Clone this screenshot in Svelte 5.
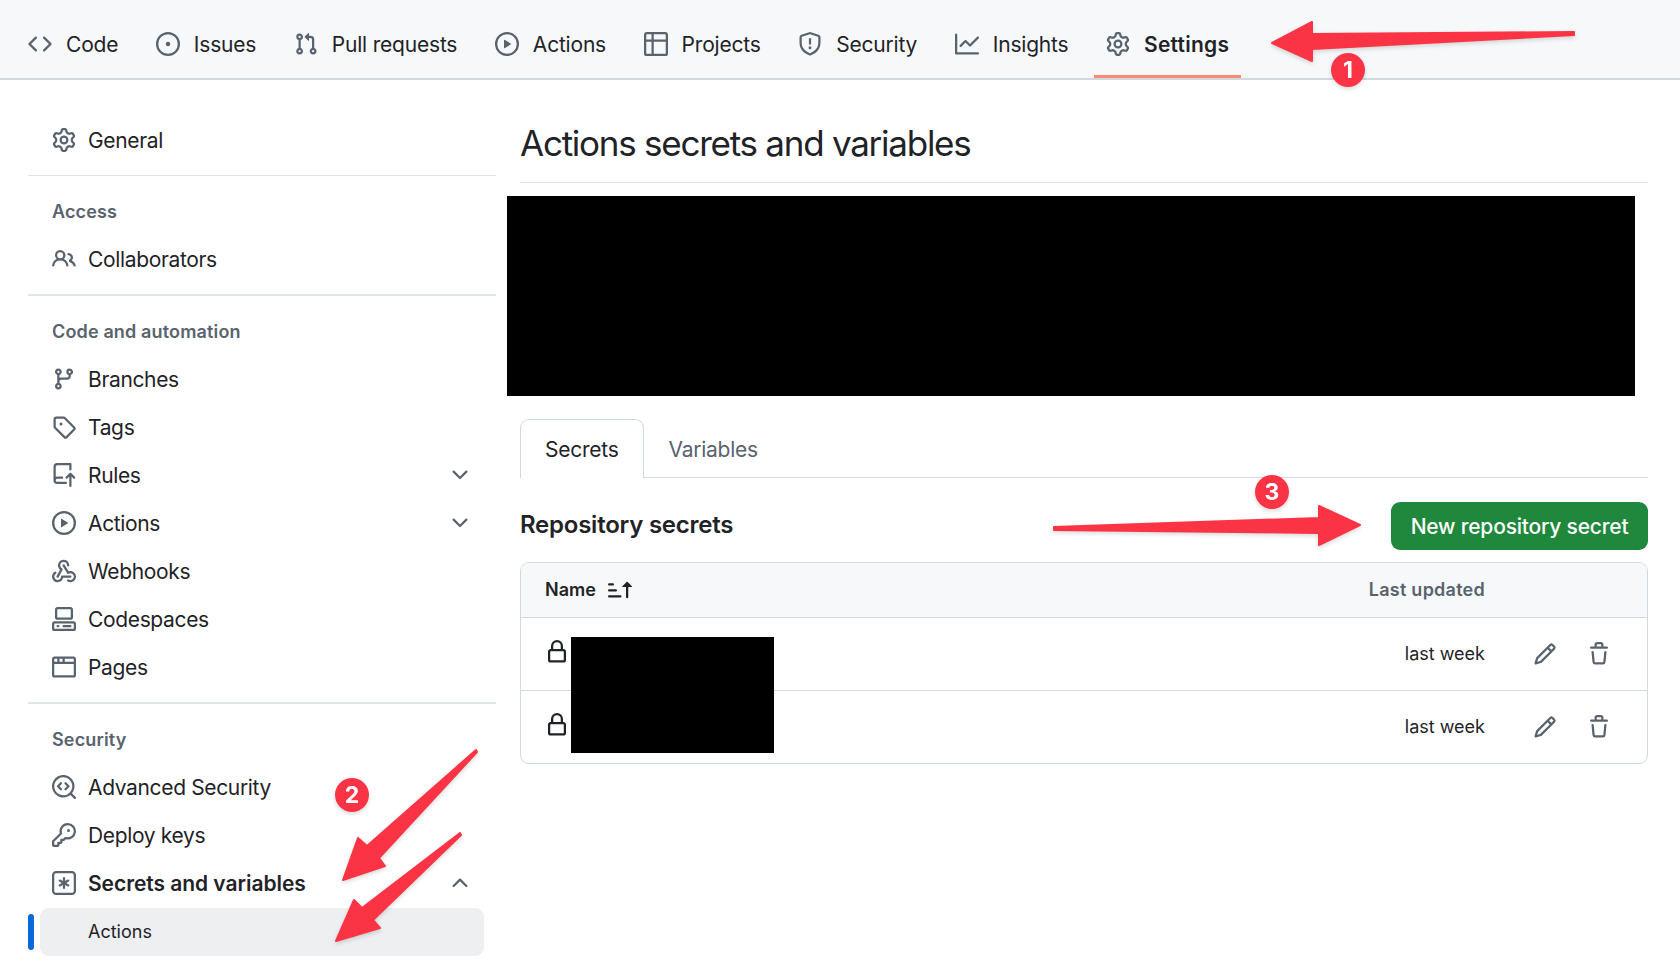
<script>
  const icons = {
    code: ['m11.28 3.22 4.25 4.25a.75.75 0 0 1 0 1.06l-4.25 4.25a.749.749 0 0 1-1.275-.326.749.749 0 0 1 .215-.734L13.94 8l-3.72-3.72a.749.749 0 0 1 .326-1.275.749.749 0 0 1 .734.215Zm-6.56 0a.751.751 0 0 1 1.042.018.751.751 0 0 1 .018 1.042L2.06 8l3.72 3.72a.749.749 0 0 1-.326 1.275.749.749 0 0 1-.734-.215L.47 8.53a.75.75 0 0 1 0-1.06Z'],
    issue: ['M8 9.5a1.5 1.5 0 1 0 0-3 1.5 1.5 0 0 0 0 3Z', 'M8 0a8 8 0 1 1 0 16A8 8 0 0 1 8 0ZM1.5 8a6.5 6.5 0 1 0 13 0 6.5 6.5 0 0 0-13 0Z'],
    pull: ['M1.5 3.25a2.25 2.25 0 1 1 3 2.122v5.256a2.251 2.251 0 1 1-1.5 0V5.372A2.25 2.25 0 0 1 1.5 3.25Zm5.677-.177L9.573.677A.25.25 0 0 1 10 .854V2.5h1A2.5 2.5 0 0 1 13.5 5v5.628a2.251 2.251 0 1 1-1.5 0V5a1 1 0 0 0-1-1h-1v1.646a.25.25 0 0 1-.427.177L7.177 3.427a.25.25 0 0 1 0-.354ZM3.75 2.5a.75.75 0 1 0 0 1.5.75.75 0 0 0 0-1.5Zm0 9.5a.75.75 0 1 0 0 1.5.75.75 0 0 0 0-1.5Zm8.25.75a.75.75 0 1 0 1.5 0 .75.75 0 0 0-1.5 0Z'],
    play: ['M8 0a8 8 0 1 1 0 16A8 8 0 0 1 8 0ZM1.5 8a6.5 6.5 0 1 0 13 0 6.5 6.5 0 0 0-13 0Zm4.879-2.773 4.264 2.559a.25.25 0 0 1 0 .428l-4.264 2.559A.25.25 0 0 1 6 10.559V5.442a.25.25 0 0 1 .379-.215Z'],
    table: ['M0 1.75C0 .784.784 0 1.75 0h12.5C15.216 0 16 .784 16 1.75v12.5A1.75 1.75 0 0 1 14.25 16H1.75A1.75 1.75 0 0 1 0 14.25ZM6.5 6.5v8h7.75a.25.25 0 0 0 .25-.25V6.5Zm8-1.5V1.75a.25.25 0 0 0-.25-.25H6.5V5Zm-13 1.5v7.75c0 .138.112.25.25.25H5v-8ZM5 5V1.5H1.75a.25.25 0 0 0-.25.25V5Z'],
    shield: ['M7.467.133a1.748 1.748 0 0 1 1.066 0l5.25 1.68A1.75 1.75 0 0 1 15 3.48V7c0 1.566-.32 3.182-1.303 4.682-.983 1.498-2.585 2.813-5.032 3.855a1.697 1.697 0 0 1-1.33 0c-2.447-1.042-4.049-2.357-5.032-3.855C1.32 10.182 1 8.566 1 7V3.48a1.75 1.75 0 0 1 1.217-1.667Zm.61 1.429a.25.25 0 0 0-.153 0l-5.25 1.68a.25.25 0 0 0-.174.238V7c0 1.358.275 2.666 1.057 3.86.784 1.194 2.121 2.34 4.366 3.297a.196.196 0 0 0 .154 0c2.245-.956 3.582-2.104 4.366-3.298C13.225 9.666 13.5 8.36 13.5 7V3.48a.251.251 0 0 0-.174-.237l-5.25-1.68ZM8.75 4.75v3a.75.75 0 0 1-1.5 0v-3a.75.75 0 0 1 1.5 0ZM9 10.5a1 1 0 1 1-2 0 1 1 0 0 1 2 0Z'],
    graph: ['M1.5 1.75V13.5h13.75a.75.75 0 0 1 0 1.5H.75a.75.75 0 0 1-.75-.75V1.75a.75.75 0 0 1 1.5 0Zm14.28 2.53-5.25 5.25a.75.75 0 0 1-1.06 0L7 7.06 4.28 9.78a.751.751 0 0 1-1.042-.018.751.751 0 0 1-.018-1.042l3.25-3.25a.75.75 0 0 1 1.06 0L10 7.94l4.72-4.72a.751.751 0 0 1 1.042.018.751.751 0 0 1 .018 1.042Z'],
    gear: ['M8 0a8.2 8.2 0 0 1 .701.031C9.444.095 9.99.645 10.16 1.29l.288 1.107c.018.066.079.158.212.224.231.114.454.243.668.386.123.082.233.09.299.071l1.103-.303c.644-.176 1.392.021 1.82.63.27.385.506.792.704 1.218.315.675.111 1.422-.364 1.891l-.814.806c-.049.048-.098.147-.088.294.016.257.016.515 0 .772-.01.147.038.246.088.294l.814.806c.475.469.679 1.216.364 1.891a7.977 7.977 0 0 1-.704 1.217c-.428.61-1.176.807-1.82.63l-1.102-.302c-.067-.019-.177-.011-.3.071a5.909 5.909 0 0 1-.668.386c-.133.066-.194.158-.211.224l-.29 1.106c-.168.646-.715 1.196-1.458 1.26a8.006 8.006 0 0 1-1.402 0c-.743-.064-1.289-.614-1.458-1.26l-.289-1.106c-.018-.066-.079-.158-.212-.224a5.738 5.738 0 0 1-.668-.386c-.123-.082-.233-.09-.299-.071l-1.103.303c-.644.176-1.392-.021-1.82-.63a8.12 8.12 0 0 1-.704-1.218c-.315-.675-.111-1.422.363-1.891l.815-.806c.05-.048.098-.147.088-.294a6.214 6.214 0 0 1 0-.772c.01-.147-.038-.246-.088-.294l-.815-.806C.635 6.045.431 5.298.746 4.623a7.92 7.92 0 0 1 .704-1.217c.428-.61 1.176-.807 1.82-.63l1.102.302c.067.019.177.011.3-.071.214-.143.437-.272.668-.386.133-.066.194-.158.211-.224l.29-1.106C6.009.645 6.556.095 7.299.03 7.53.01 7.764 0 8 0Zm-.571 1.525c-.036.003-.108.036-.137.146l-.289 1.105c-.147.561-.549.967-.998 1.189-.173.086-.34.183-.5.29-.417.278-.97.423-1.529.27l-1.103-.303c-.109-.03-.175.016-.195.045-.22.312-.412.644-.573.99-.014.031-.021.11.059.19l.815.806c.411.406.562.957.53 1.456a4.709 4.709 0 0 0 0 .582c.032.499-.119 1.05-.53 1.456l-.815.806c-.081.08-.073.159-.059.19.162.346.353.677.573.989.02.03.085.076.195.046l1.102-.303c.56-.153 1.113-.008 1.53.27.161.107.328.204.501.29.447.222.85.629.997 1.189l.289 1.105c.029.109.101.143.137.146a6.6 6.6 0 0 0 1.142 0c.036-.003.108-.036.137-.146l.289-1.105c.147-.561.549-.967.998-1.189.173-.086.34-.183.5-.29.417-.278.97-.423 1.529-.27l1.103.303c.109.029.175-.016.195-.045.22-.313.411-.644.573-.99.014-.031.021-.11-.059-.19l-.815-.806c-.411-.406-.562-.957-.53-1.456a4.709 4.709 0 0 0 0-.582c-.032-.499.119-1.05.53-1.456l.815-.806c.081-.08.073-.159.059-.19a6.464 6.464 0 0 0-.573-.989c-.02-.03-.085-.076-.195-.046l-1.102.303c-.56.153-1.113.008-1.53-.27a4.44 4.44 0 0 0-.501-.29c-.447-.222-.85-.629-.997-1.189l-.289-1.105c-.029-.11-.101-.143-.137-.146a6.6 6.6 0 0 0-1.142 0ZM11 8a3 3 0 1 1-6 0 3 3 0 0 1 6 0ZM9.5 8a1.5 1.5 0 1 0-3.001.001A1.5 1.5 0 0 0 9.5 8Z'],
    people: ['M2 5.5a3.5 3.5 0 1 1 5.898 2.549 5.508 5.508 0 0 1 3.034 4.084.75.75 0 1 1-1.482.235 4 4 0 0 0-7.9 0 .75.75 0 0 1-1.482-.236A5.507 5.507 0 0 1 3.102 8.05 3.493 3.493 0 0 1 2 5.5ZM11 4a3.001 3.001 0 0 1 2.22 5.018 5.01 5.01 0 0 1 2.56 3.012.749.749 0 0 1-.885.954.752.752 0 0 1-.549-.514 3.507 3.507 0 0 0-2.522-2.372.75.75 0 0 1-.574-.73v-.352a.75.75 0 0 1 .416-.672A1.5 1.5 0 0 0 11 5.5.75.75 0 0 1 11 4Zm-5.5-.5a2 2 0 1 0-.001 3.999A2 2 0 0 0 5.5 3.5Z'],
    branch: ['M9.5 3.25a2.25 2.25 0 1 1 3 2.122V6A2.5 2.5 0 0 1 10 8.5H6a1 1 0 0 0-1 1v1.128a2.251 2.251 0 1 1-1.5 0V5.372a2.25 2.25 0 1 1 1.5 0v1.836A2.493 2.493 0 0 1 6 7h4a1 1 0 0 0 1-1v-.628A2.25 2.25 0 0 1 9.5 3.25Zm-6 0a.75.75 0 1 0 1.5 0 .75.75 0 0 0-1.5 0Zm8.25-.75a.75.75 0 1 0 0 1.5.75.75 0 0 0 0-1.5ZM4.25 12a.75.75 0 1 0 0 1.5.75.75 0 0 0 0-1.5Z'],
    tag: ['M1 7.775V2.75C1 1.784 1.784 1 2.75 1h5.025c.464 0 .91.184 1.238.513l6.25 6.25a1.75 1.75 0 0 1 0 2.474l-5.026 5.026a1.75 1.75 0 0 1-2.474 0l-6.25-6.25A1.752 1.752 0 0 1 1 7.775Zm1.5 0c0 .066.026.13.073.177l6.25 6.25a.25.25 0 0 0 .354 0l5.025-5.025a.25.25 0 0 0 0-.354l-6.25-6.25a.25.25 0 0 0-.177-.073H2.75a.25.25 0 0 0-.25.25ZM6 5a1 1 0 1 1 0 2 1 1 0 0 1 0-2Z'],
    push: ['M1 2.5A2.5 2.5 0 0 1 3.5 0h8.75a.75.75 0 0 1 .75.75v3.5a.75.75 0 0 1-1.5 0V1.5h-8a1 1 0 0 0-1 1v6.708A2.493 2.493 0 0 1 3.5 9h3.25a.75.75 0 0 1 0 1.5H3.5a1 1 0 0 0 0 2h5.75a.75.75 0 0 1 0 1.5H3.5A2.5 2.5 0 0 1 1 11.5Zm13.23 7.79h-.001l-1.224-1.224v6.184a.75.75 0 0 1-1.5 0V9.066L10.28 10.29a.75.75 0 0 1-1.06-1.061l2.505-2.504a.75.75 0 0 1 1.06 0L15.29 9.23a.751.751 0 0 1-.018 1.042.751.751 0 0 1-1.042.018Z'],
    webhook: ['M5.5 4.25a2.25 2.25 0 0 1 4.5 0 .75.75 0 0 0 1.5 0 3.75 3.75 0 1 0-6.14 2.889l-2.272 4.258a.75.75 0 0 0 1.324.706L7 7.25a.75.75 0 0 0-.309-1.015A2.25 2.25 0 0 1 5.5 4.25Z', 'M7.364 3.607a.75.75 0 0 1 1.03.257l2.608 4.349a3.75 3.75 0 1 1-.628 6.785.75.75 0 0 1 .752-1.299 2.25 2.25 0 1 0-.033-3.88.75.75 0 0 1-1.03-.256L7.107 4.636a.75.75 0 0 1 .257-1.03Z', 'M2.9 8.776A.75.75 0 0 1 2.625 9.8 2.25 2.25 0 1 0 6 11.75a.75.75 0 0 1 .75-.751h5.5a.75.75 0 0 1 0 1.5H7.425a3.751 3.751 0 1 1-5.55-3.998.75.75 0 0 1 1.024.274Z'],
    codespaces: ['M0 11.25c0-.966.784-1.75 1.75-1.75h12.5c.966 0 1.75.784 1.75 1.75v3A1.75 1.75 0 0 1 14.25 16H1.75A1.75 1.75 0 0 1 0 14.25Zm2-9.5C2 .784 2.784 0 3.75 0h8.5C13.216 0 14 .784 14 1.75v5a1.75 1.75 0 0 1-1.75 1.75h-8.5A1.75 1.75 0 0 1 2 6.75Zm1.75-.25a.25.25 0 0 0-.25.25v5c0 .138.112.25.25.25h8.5a.25.25 0 0 0 .25-.25v-5a.25.25 0 0 0-.25-.25Zm-2 9.5a.25.25 0 0 0-.25.25v3c0 .138.112.25.25.25h12.5a.25.25 0 0 0 .25-.25v-3a.25.25 0 0 0-.25-.25Z', 'M7 12.75a.75.75 0 0 1 .75-.75h4.5a.75.75 0 0 1 0 1.5h-4.5a.75.75 0 0 1-.75-.75Zm-4 0a.75.75 0 0 1 .75-.75h.5a.75.75 0 0 1 0 1.5h-.5a.75.75 0 0 1-.75-.75Z'],
    browser: ['M0 2.75C0 1.784.784 1 1.75 1h12.5c.966 0 1.75.784 1.75 1.75v10.5A1.75 1.75 0 0 1 14.25 15H1.75A1.75 1.75 0 0 1 0 13.25ZM14.5 6h-13v7.25c0 .138.112.25.25.25h12.5a.25.25 0 0 0 .25-.25Zm0-1.5v-1.75a.25.25 0 0 0-.25-.25H8.5v2ZM7 4.5V2.5H5v2ZM3.5 4.5v-2H1.75a.25.25 0 0 0-.25.25V4.5Z'],
    codescan: ['M8.47 4.97a.75.75 0 0 0 0 1.06L9.94 7.5 8.47 8.97a.75.75 0 1 0 1.06 1.06l2-2a.75.75 0 0 0 0-1.06l-2-2a.75.75 0 0 0-1.06 0ZM6.53 6.03a.75.75 0 0 0-1.06-1.06l-2 2a.75.75 0 0 0 0 1.06l2 2a.75.75 0 1 0 1.06-1.06L5.06 7.5l1.47-1.47Z', 'M12.246 13.307a7.501 7.501 0 1 1 1.06-1.06l2.474 2.473a.749.749 0 0 1-.326 1.275.749.749 0 0 1-.734-.215ZM1.5 7.5a6 6 0 0 0 10.386 4.093.748.748 0 0 1 .207-.206A6 6 0 1 0 1.5 7.5Z'],
    key: ['M10.5 0a5.499 5.499 0 1 1-1.288 10.848l-.932.932a.749.749 0 0 1-.53.22H7v.75a.749.749 0 0 1-.22.53l-.5.5a.749.749 0 0 1-.53.22H5v.75a.749.749 0 0 1-.22.53l-.5.5a.749.749 0 0 1-.53.22h-2A1.75 1.75 0 0 1 0 14.25v-2c0-.199.079-.389.22-.53l4.932-4.932A5.5 5.5 0 0 1 10.5 0Zm-4 5.5c-.001.431.069.86.205 1.269a.75.75 0 0 1-.181.768L1.5 12.56v1.69c0 .138.112.25.25.25h1.69l.06-.06v-1.19a.75.75 0 0 1 .75-.75h1.19l.06-.06v-1.19a.75.75 0 0 1 .75-.75h1.19l1.023-1.025a.75.75 0 0 1 .768-.18A4 4 0 1 0 6.5 5.5ZM11 6a1 1 0 1 1 0-2 1 1 0 0 1 0 2Z'],
    asterisk: ['M0 2.75A2.75 2.75 0 0 1 2.75 0h10.5A2.75 2.75 0 0 1 16 2.75v10.5A2.75 2.75 0 0 1 13.25 16H2.75A2.75 2.75 0 0 1 0 13.25ZM2.75 1.5c-.69 0-1.25.56-1.25 1.25v10.5c0 .69.56 1.25 1.25 1.25h10.5c.69 0 1.25-.56 1.25-1.25V2.75c0-.69-.56-1.25-1.25-1.25Z', 'M8 4a.75.75 0 0 1 .75.75V6.7l1.69-.975a.75.75 0 0 1 .75 1.3L9.5 8l1.69.976a.75.75 0 0 1-.75 1.298L8.75 9.3v1.951a.75.75 0 0 1-1.5 0V9.299l-1.69.976a.75.75 0 0 1-.75-1.3L6.5 8l-1.69-.975a.75.75 0 0 1 .75-1.3l1.69.976V4.75A.75.75 0 0 1 8 4Z'],
    down: ['M12.78 5.22a.749.749 0 0 1 0 1.06l-4.25 4.25a.749.749 0 0 1-1.06 0L3.22 6.28a.749.749 0 1 1 1.06-1.06L8 8.939l3.72-3.72a.749.749 0 0 1 1.06 0Z'],
    up: ['M3.22 10.53a.749.749 0 0 1 0-1.06l4.25-4.25a.749.749 0 0 1 1.06 0l4.25 4.25a.749.749 0 1 1-1.06 1.06L8 6.811 4.28 10.53a.749.749 0 0 1-1.06 0Z'],
    lock: ['M4 4a4 4 0 0 1 8 0v2h.25c.966 0 1.75.784 1.75 1.75v5.5A1.75 1.75 0 0 1 12.25 15h-8.5A1.75 1.75 0 0 1 2 13.25v-5.5C2 6.784 2.784 6 3.75 6H4Zm8.25 3.5h-8.5a.25.25 0 0 0-.25.25v5.5c0 .138.112.25.25.25h8.5a.25.25 0 0 0 .25-.25v-5.5a.25.25 0 0 0-.25-.25ZM10.5 6V4a2.5 2.5 0 1 0-5 0v2Z'],
    pencil: ['M11.013 1.427a1.75 1.75 0 0 1 2.474 0l1.086 1.086a1.75 1.75 0 0 1 0 2.474l-8.61 8.61c-.21.21-.47.364-.756.445l-3.251.93a.75.75 0 0 1-.927-.928l.929-3.25c.081-.286.235-.547.445-.758l8.61-8.61Zm.176 4.823L9.75 4.81l-6.286 6.287a.253.253 0 0 0-.064.108l-.558 1.953 1.953-.558a.253.253 0 0 0 .108-.064Zm1.238-3.763a.25.25 0 0 0-.354 0L10.811 3.75l1.439 1.44 1.263-1.263a.25.25 0 0 0 0-.354Z'],
    trash: ['M11 1.75V3h2.25a.75.75 0 0 1 0 1.5H2.75a.75.75 0 0 1 0-1.5H5V1.75C5 .784 5.784 0 6.75 0h2.5C10.216 0 11 .784 11 1.75ZM4.496 6.675l.66 6.6a.25.25 0 0 0 .249.225h5.19a.25.25 0 0 0 .249-.225l.66-6.6a.75.75 0 0 1 1.492.149l-.66 6.6A1.748 1.748 0 0 1 10.595 15h-5.19a1.75 1.75 0 0 1-1.741-1.575l-.66-6.6a.75.75 0 1 1 1.492-.15ZM6.5 1.75V3h3V1.75a.25.25 0 0 0-.25-.25h-2.5a.25.25 0 0 0-.25.25Z'],
    sort: ['m12.927 2.573 3 3A.25.25 0 0 1 15.75 6H13.5v6.75a.75.75 0 0 1-1.5 0V6H9.75a.25.25 0 0 1-.177-.427l3-3a.25.25 0 0 1 .354 0ZM0 12.25a.75.75 0 0 1 .75-.75h7.5a.75.75 0 0 1 0 1.5H.75a.75.75 0 0 1-.75-.75Zm0-4a.75.75 0 0 1 .75-.75h4.5a.75.75 0 0 1 0 1.5H.75A.75.75 0 0 1 0 8.25Zm0-4a.75.75 0 0 1 .75-.75h2.5a.75.75 0 0 1 0 1.5H.75A.75.75 0 0 1 0 4.25Z']
  };

  const tabs = [
    { label: 'Code', icon: 'code' },
    { label: 'Issues', icon: 'issue' },
    { label: 'Pull requests', icon: 'pull' },
    { label: 'Actions', icon: 'play' },
    { label: 'Projects', icon: 'table' },
    { label: 'Security', icon: 'shield' },
    { label: 'Insights', icon: 'graph' },
    { label: 'Settings', icon: 'gear', active: true }
  ];

  const sections = [
    { items: [{ label: 'General', icon: 'gear' }] },
    { title: 'Access', items: [{ label: 'Collaborators', icon: 'people' }] },
    {
      title: 'Code and automation',
      items: [
        { label: 'Branches', icon: 'branch' },
        { label: 'Tags', icon: 'tag' },
        { label: 'Rules', icon: 'push', chevron: 'down' },
        { label: 'Actions', icon: 'play', chevron: 'down' },
        { label: 'Webhooks', icon: 'webhook' },
        { label: 'Codespaces', icon: 'codespaces' },
        { label: 'Pages', icon: 'browser' }
      ]
    },
    {
      title: 'Security',
      items: [
        { label: 'Advanced Security', icon: 'codescan' },
        { label: 'Deploy keys', icon: 'key' },
        { label: 'Secrets and variables', icon: 'asterisk', chevron: 'up', strong: true }
      ]
    }
  ];

  const secrets = ['last week', 'last week'];
</script>

{#snippet icon(name)}
  <svg class="icon" viewBox="0 0 16 16" fill="currentColor" fill-rule="evenodd" aria-hidden="true">
    {#each icons[name] as d}
      <path {d} />
    {/each}
  </svg>
{/snippet}

<header class="repo-nav">
  {#each tabs as tab}
    <a class="repo-tab" class:active={tab.active}>
      <span class="tab-icon">{@render icon(tab.icon)}</span>
      <span>{tab.label}</span>
    </a>
  {/each}
</header>

<div class="page">
  <nav class="sidebar">
    {#each sections as section, i}
      {#if i > 0}
        <div class="divider" class:thin={i === 1}></div>
      {/if}
      {#if section.title}
        <h3>{section.title}</h3>
      {/if}
      {#each section.items as item}
        <a class="side-item" class:strong={item.strong}>
          <span class="side-icon">{@render icon(item.icon)}</span>
          <span class="side-label">{item.label}</span>
          {#if item.chevron}
            <span class="chevron">{@render icon(item.chevron)}</span>
          {/if}
        </a>
      {/each}
    {/each}
    <div class="sub-row">
      <span class="marker"></span>
      <a class="sub-item">Actions</a>
    </div>
  </nav>

  <main>
    <h1>Actions secrets and variables</h1>
    <div class="redacted-banner"></div>

    <div class="tabnav">
      <a class="tabnav-tab selected">Secrets</a>
      <a class="tabnav-tab">Variables</a>
    </div>

    <div class="section-head">
      <h2>Repository secrets</h2>
      <button type="button">New repository secret</button>
    </div>

    <div class="table">
      <div class="row head">
        <span class="name">Name <span class="sort">{@render icon('sort')}</span></span>
        <span class="updated">Last updated</span>
      </div>
      {#each secrets as when}
        <div class="row">
          <span class="lock">{@render icon('lock')}</span>
          <span class="when">{when}</span>
          <span class="action pencil">{@render icon('pencil')}</span>
          <span class="action">{@render icon('trash')}</span>
        </div>
      {/each}
      <div class="redacted-names"></div>
    </div>
  </main>
</div>

<svg class="annotations" viewBox="0 0 1680 971" aria-hidden="true">
  <g fill="#fb3445" stroke="#fb3445" stroke-width="2" stroke-linejoin="round">
    <polygon points="1272,43 1312,22 1312,34 1574,32 1574,35 1312,49 1312,61" />
    <polygon points="1360,525 1319,506 1319,518 1054,527 1054,530 1319,533 1319,545" />
    <polygon points="343,880 358,838 367,846 476,750 477,752 379,858 385,866" />
    <polygon points="336,941 354,900 362,908 460,833 461,835 373,920 380,928" />
    <g stroke="none">
      <circle cx="1348" cy="70" r="17" />
      <circle cx="352" cy="795" r="17" />
      <circle cx="1272" cy="492" r="17" />
    </g>
  </g>
  <g class="badge-text">
    <text x="1348" y="78">1</text>
    <text x="352" y="803">2</text>
    <text x="1272" y="500">3</text>
  </g>
</svg>

<style>
  :global(body) {
    margin: 0;
    background: #fff;
    overflow: hidden;
  }

  :global(#app) {
    position: relative;
    font-family: Inter, "Liberation Sans", sans-serif;
    color: #1f2328;
  }

  .icon {
    display: block;
    width: 24px;
    height: 24px;
  }

  .repo-nav {
    display: flex;
    gap: 13.6px;
    height: 68px;
    padding: 10px 0 0 16px;
    background: #f6f8fa;
    border-bottom: 2px solid #d1d9e0;
  }

  .repo-tab {
    display: flex;
    align-items: center;
    gap: 14px;
    padding: 3px 12px 0;
    border-bottom: 3px solid transparent;
    font-size: 21px;
    letter-spacing: -0.2px;
  }

  .repo-tab.active {
    border-bottom-color: #fd8c73;
    font-weight: 600;
    letter-spacing: 0.25px;
  }

  .tab-icon,
  .side-icon,
  .chevron,
  .sort,
  .action,
  .lock {
    color: #59636e;
    flex: none;
  }

  .page {
    display: flex;
  }

  .sidebar {
    width: 468px;
    flex: none;
    margin-left: 28px;
    padding-top: 36px;
  }

  .divider {
    height: 2px;
    margin-top: 11px;
    background: #dfe4e9;
  }

  .divider.thin {
    height: 1px;
  }

  h3 {
    margin: 0;
    padding: 24px 0 11px 24px;
    font-size: 18px;
    line-height: 24px;
    font-weight: 600;
    letter-spacing: 0.15px;
    color: #59636e;
  }

  .side-item {
    display: flex;
    align-items: center;
    height: 48px;
    padding-left: 24px;
    font-size: 21px;
    letter-spacing: -0.35px;
  }

  .side-item.strong {
    font-weight: 600;
    letter-spacing: -0.05px;
  }

  .side-label {
    margin-left: 12px;
    flex: 1;
  }

  .chevron {
    margin-right: 24px;
  }

  .sub-row {
    display: flex;
    align-items: center;
    gap: 6px;
    margin-top: 1px;
  }

  .marker {
    width: 6px;
    height: 36px;
    border-radius: 6px;
    background: #0969da;
  }

  .sub-item {
    width: 444px;
    height: 48px;
    line-height: 48px;
    padding-left: 48px;
    box-sizing: border-box;
    border-radius: 9px;
    background: #edeff1;
    font-size: 18px;
  }

  main {
    width: 1128px;
    flex: none;
    margin-left: 24px;
    padding-top: 36px;
  }

  h1 {
    margin: 0;
    padding-bottom: 12px;
    border-bottom: 1px solid #dfe4e9;
    font-size: 35px;
    line-height: 54px;
    font-weight: 400;
    letter-spacing: -1.25px;
  }

  .redacted-banner {
    height: 200px;
    margin: 13px 13px 0 -13px;
    background: #000;
  }

  .tabnav {
    display: flex;
    margin-top: 23px;
    border-bottom: 1px solid #d1d9e0;
  }

  .tabnav-tab {
    height: 58px;
    line-height: 60px;
    padding: 0 24px;
    box-sizing: border-box;
    border: 1px solid transparent;
    border-bottom: 0;
    margin-bottom: -1px;
    font-size: 21px;
    letter-spacing: -0.25px;
    color: #59636e;
  }

  .tabnav-tab.selected {
    height: 59px;
    border-color: #d1d9e0;
    border-radius: 9px 9px 0 0;
    background: #fff;
    color: #1f2328;
  }

  .section-head {
    display: flex;
    justify-content: space-between;
    align-items: center;
    margin-top: 24px;
  }

  h2 {
    margin: 0;
    padding-bottom: 3px;
    font-size: 24px;
    font-weight: 600;
    letter-spacing: -0.24px;
  }

  button {
    width: 257px;
    height: 48px;
    padding: 0;
    border: 0;
    border-radius: 9px;
    background: #1f883d;
    color: #fff;
    font: 500 21px Inter, "Liberation Sans", sans-serif;
    letter-spacing: -0.2px;
  }

  .table {
    position: relative;
    margin-top: 12px;
    border: 1px solid #d1d9e0;
    border-radius: 9px;
    overflow: hidden;
  }

  .row {
    display: flex;
    align-items: center;
    height: 72px;
    padding: 0 36px 0 24px;
    border-top: 1px solid #d1d9e0;
    font-size: 18px;
  }

  .row.head {
    height: 54px;
    padding-right: 162px;
    border-top: 0;
    background: #f6f8fa;
    font-weight: 600;
  }

  .name {
    display: flex;
    align-items: center;
    gap: 12px;
    flex: 1;
    padding-bottom: 1px;
  }

  .sort {
    color: #1f2328;
  }

  .updated {
    padding-bottom: 1px;
    color: #59636e;
    letter-spacing: 0.25px;
  }

  .when {
    padding-bottom: 2px;
  }

  .lock {
    flex: 1;
    padding-bottom: 4px;
    color: #1f2328;
  }

  .action.pencil {
    margin: 0 30px 0 48px;
  }

  .redacted-names {
    position: absolute;
    left: 50px;
    top: 74px;
    width: 203px;
    height: 116px;
    background: #000;
  }

  .annotations {
    position: absolute;
    left: 0;
    top: 0;
    width: 1680px;
    height: 971px;
    pointer-events: none;
    filter: drop-shadow(0 2px 2px rgba(0, 0, 0, 0.15));
  }

  .badge-text text {
    fill: #fff;
    font-size: 23px;
    font-weight: 700;
    text-anchor: middle;
  }
</style>
